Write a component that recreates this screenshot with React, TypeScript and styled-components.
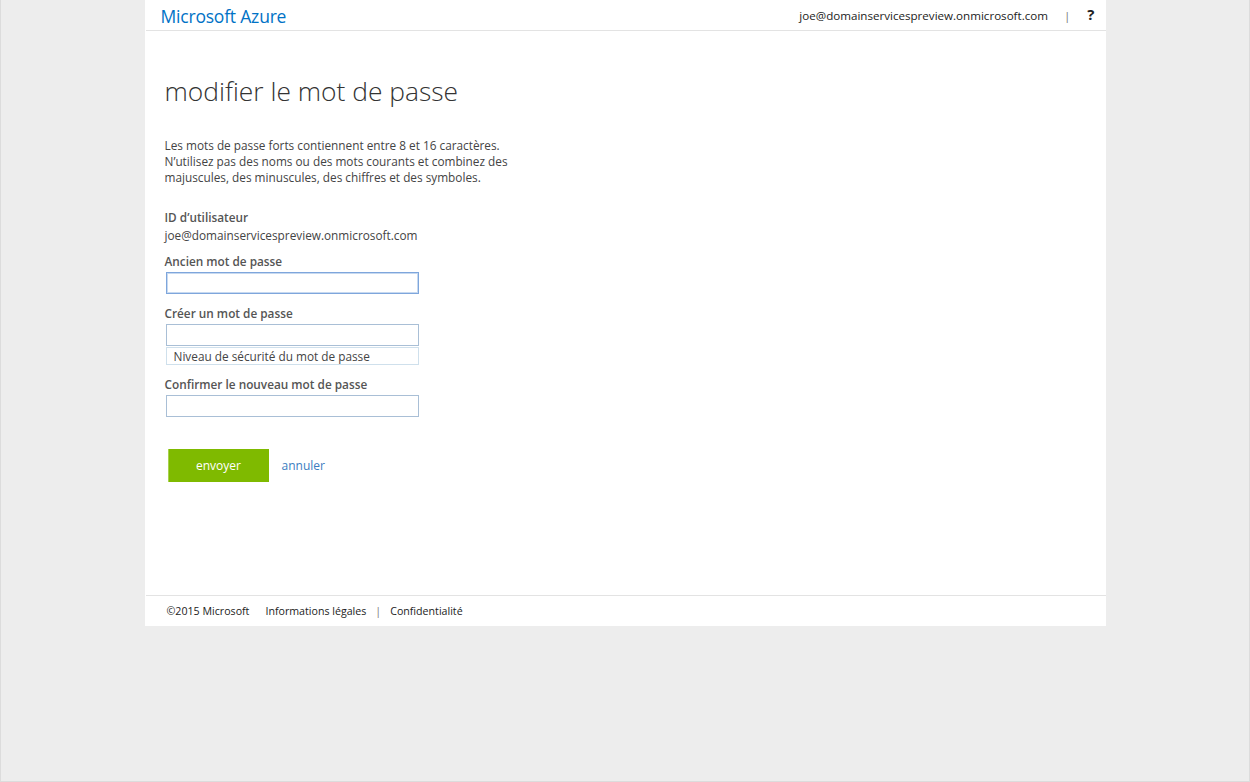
import styled, { createGlobalStyle } from "styled-components";

const GlobalStyle = createGlobalStyle`
  html, body {
    margin: 0;
    padding: 0;
    background: #ededed;
    font-family: "Open Sans", "Noto Sans", sans-serif;
  }
`;

const Frame = styled.div`
  box-sizing: border-box;
  height: 782px;
  border: 1px solid #dcdcdc;
  border-top: none;
  background: #ededed;
`;

const Panel = styled.div`
  width: 960px;
  margin: 0 auto;
  padding-left: 1px;
  background: #fff;
`;

const Header = styled.header`
  height: 30px;
  border-bottom: 1px solid #e3e3e3;
  display: flex;
  align-items: center;
  padding: 0 11px 0 15px;
`;

const Brand = styled.span`
  font-size: 17.5px;
  color: #0072c6;
  letter-spacing: -0.2px;
  margin-top: 2px;
`;

const HeaderRight = styled.div`
  margin-left: auto;
  display: flex;
  align-items: center;
  font-size: 11.6px;
  color: #222;
`;

const Sep = styled.span<{ $left: number; $right: number }>`
  color: #777;
  margin: 0 ${(p) => p.$right}px 0 ${(p) => p.$left}px;
`;

const Help = styled.span`
  font-weight: 700;
  font-size: 15px;
  margin-top: -3px;
  color: #222;
`;

const Main = styled.main`
  height: 564px;
  padding: 42px 19px 0;
  box-sizing: border-box;
`;

const Title = styled.h1`
  margin: 0 0 28px;
  font-size: 26.4px;
  font-weight: 300;
  color: #333;
  line-height: 36px;
`;

const Intro = styled.p`
  margin: 0 0 23px;
  font-size: 11.8px;
  line-height: 16px;
  color: #444;
  width: 360px;
`;

const Label = styled.div`
  font-size: 11.8px;
  font-weight: 600;
  color: #555;
  line-height: 18px;
`;

const FieldLabel = styled(Label)`
  padding-bottom: 2px;
`;

const Value = styled.div`
  font-size: 11.8px;
  color: #444;
  line-height: 18px;
  margin-bottom: 8px;
`;

const Field = styled.div`
  margin-bottom: 10px;
`;

const Input = styled.input<{ $focused?: boolean }>`
  display: block;
  box-sizing: border-box;
  width: 253px;
  height: 22px;
  margin: 0 0 0 1px;
  border: 1px solid ${(p) => (p.$focused ? "#7ea6dc" : "#a9bfd6")};
  box-shadow: ${(p) => (p.$focused ? "inset 0 0 0 1px #c7d9f0" : "none")};
  outline: none;
  background: #fff;
  padding: 0 2px;
  font-size: 12px;
`;

const Strength = styled.div`
  box-sizing: border-box;
  width: 253px;
  height: 18px;
  margin: 1px 0 0 1px;
  border: 1px solid #cfe0ec;
  padding-left: 7px;
  font-size: 11.8px;
  line-height: 16px;
  color: #444;
`;

const Actions = styled.div`
  display: flex;
  align-items: center;
  gap: 13px;
  margin: 32px 0 0 3px;
`;

const Submit = styled.button`
  width: 101px;
  height: 33px;
  border: none;
  border-left: 1px solid #a8d24c;
  background: #7fba00;
  color: #fff;
  font-family: inherit;
  font-size: 12px;
  cursor: pointer;
`;

const Cancel = styled.a`
  color: #3b7dbf;
  font-size: 12px;
  text-decoration: none;
`;

const Footer = styled.footer`
  height: 30px;
  border-top: 1px solid #e3e3e3;
  display: flex;
  align-items: center;
  padding-left: 21px;
  font-size: 10.65px;
  color: #222;
`;

const FooterLink = styled.span<{ $ml?: number }>`
  margin-left: ${(p) => p.$ml ?? 0}px;
`;

function App() {
  return (
    <>
      <GlobalStyle />
      <Frame>
        <Panel>
          <Header>
            <Brand>Microsoft Azure</Brand>
            <HeaderRight>
              <span>joe@domainservicespreview.onmicrosoft.com</span>
              <Sep $left={16} $right={17}>|</Sep>
              <Help>?</Help>
            </HeaderRight>
          </Header>
          <Main>
            <Title>modifier le mot de passe</Title>
            <Intro>
              Les mots de passe forts contiennent entre 8 et 16 caractères.
              <br />
              N’utilisez pas des noms ou des mots courants et combinez des
              <br />
              majuscules, des minuscules, des chiffres et des symboles.
            </Intro>
            <Label>ID d’utilisateur</Label>
            <Value>joe@domainservicespreview.onmicrosoft.com</Value>
            <Field>
              <FieldLabel>Ancien mot de passe</FieldLabel>
              <Input type="password" $focused autoFocus />
            </Field>
            <Field>
              <FieldLabel>Créer un mot de passe</FieldLabel>
              <Input type="password" />
              <Strength>Niveau de sécurité du mot de passe</Strength>
            </Field>
            <Field>
              <FieldLabel>Confirmer le nouveau mot de passe</FieldLabel>
              <Input type="password" />
            </Field>
            <Actions>
              <Submit>envoyer</Submit>
              <Cancel href="#">annuler</Cancel>
            </Actions>
          </Main>
          <Footer>
            <span>©2015 Microsoft</span>
            <FooterLink $ml={16}>Informations légales</FooterLink>
            <Sep $left={9} $right={9}>|</Sep>
            <FooterLink>Confidentialité</FooterLink>
          </Footer>
        </Panel>
      </Frame>
    </>
  );
}

export default App;
